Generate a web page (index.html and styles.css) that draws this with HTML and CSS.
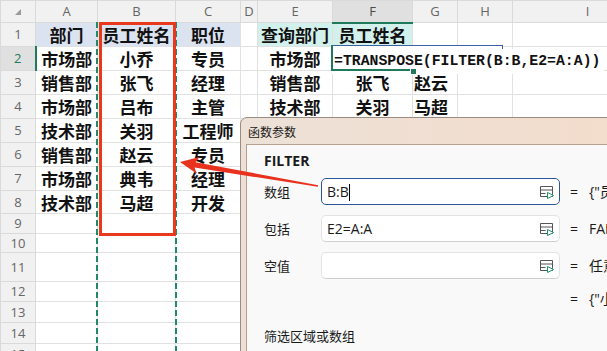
FILE: index.html
```html
<!DOCTYPE html>
<html>
<head>
    <title>FILTER 函数参数</title>
    <link rel="stylesheet" href="styles.css">
</head>
<body>
    <table class="grid">
        <colgroup>
            <col class="w-head"><col class="w-a"><col class="w-b"><col class="w-c"><col class="w-d">
            <col class="w-e"><col class="w-f"><col class="w-g"><col class="w-h"><col class="w-i">
        </colgroup>
        <tr class="h22">
            <th class="corner"><svg width="6" height="6" viewBox="0 0 6 6"><polygon points="6,0 6,6 0,6" fill="#9a9a9a"/></svg></th>
            <th>A</th><th>B</th><th>C</th><th>D</th><th>E</th><th class="sel-col">F</th><th>G</th><th>H</th><th>I</th>
        </tr>
        <tr class="h24"><th>1</th><td class="blue">部门</td><td class="blue">员工姓名</td><td class="blue">职位</td><td></td><td class="mint">查询部门</td><td class="mint">员工姓名</td><td></td><td></td><td></td></tr>
        <tr class="h24"><th class="sel-row">2</th><td>市场部</td><td>小乔</td><td>专员</td><td></td><td>市场部</td><td></td><td></td><td></td><td></td></tr>
        <tr class="h24"><th>3</th><td>销售部</td><td>张飞</td><td>经理</td><td></td><td>销售部</td><td>张飞</td><td class="left">赵云</td><td></td><td></td></tr>
        <tr class="h24"><th>4</th><td>市场部</td><td>吕布</td><td>主管</td><td></td><td>技术部</td><td>关羽</td><td class="left">马超</td><td></td><td></td></tr>
        <tr class="h24"><th>5</th><td>技术部</td><td>关羽</td><td>工程师</td><td></td><td></td><td></td><td></td><td></td><td></td></tr>
        <tr class="h24"><th>6</th><td>销售部</td><td>赵云</td><td>专员</td><td></td><td></td><td></td><td></td><td></td><td></td></tr>
        <tr class="h24"><th>7</th><td>市场部</td><td>典韦</td><td>经理</td><td></td><td></td><td></td><td></td><td></td><td></td></tr>
        <tr class="h23"><th>8</th><td>技术部</td><td>马超</td><td>开发</td><td></td><td></td><td></td><td></td><td></td><td></td></tr>
        <tr class="h20"><th>9</th><td></td><td></td><td></td><td></td><td></td><td></td><td></td><td></td><td></td></tr>
        <tr class="h19"><th>10</th><td></td><td></td><td></td><td></td><td></td><td></td><td></td><td></td><td></td></tr>
        <tr class="h29"><th>11</th><td></td><td></td><td></td><td></td><td></td><td></td><td></td><td></td><td></td></tr>
        <tr class="h20"><th>12</th><td></td><td></td><td></td><td></td><td></td><td></td><td></td><td></td><td></td></tr>
        <tr class="h21"><th>13</th><td></td><td></td><td></td><td></td><td></td><td></td><td></td><td></td><td></td></tr>
        <tr class="h21"><th>14</th><td></td><td></td><td></td><td></td><td></td><td></td><td></td><td></td><td></td></tr>
        <tr class="h21"><th>15</th><td></td><td></td><td></td><td></td><td></td><td></td><td></td><td></td><td></td></tr>
    </table>

    <!-- copy marquee around column B -->
    <div class="ants ants-left"></div>
    <div class="ants ants-right"></div>
    <div class="pick"></div>

    <!-- in-cell editor on F2 -->
    <div class="editor"><span class="formula">=TRANSPOSE(FILTER(B:B,E2=A:A))</span></div>
    <div class="active-cell"></div>
    <div class="fill-handle"></div>

    <div class="dialog">
        <div class="dialog-title">函数参数</div>
        <div class="dialog-body">
            <div class="fn-name">FILTER</div>
            <div class="args">
                <div class="arg-label">数组</div>
                <div class="arg-input focused"><span>B:B<span class="caret"></span></span>
                    <svg class="ref-icon" width="16" height="15" viewBox="0 0 16 15"><path d="M1.5 1.5h12v10h-12z M1.5 5h12 M1.5 8.5h5" fill="none" stroke="#555"/><path d="M8.5 7.5l6 3-6 3z" fill="#fff" stroke="#1d9468"/></svg>
                </div>
                <div class="arg-value"><span class="eq">=</span>{"员工姓名";"小乔";"张飞";"吕布"}</div>

                <div class="arg-label">包括</div>
                <div class="arg-input"><span>E2=A:A</span>
                    <svg class="ref-icon" width="16" height="15" viewBox="0 0 16 15"><path d="M1.5 1.5h12v10h-12z M1.5 5h12 M1.5 8.5h5" fill="none" stroke="#555"/><path d="M8.5 7.5l6 3-6 3z" fill="#fff" stroke="#1d9468"/></svg>
                </div>
                <div class="arg-value"><span class="eq">=</span>FALSE</div>

                <div class="arg-label">空值</div>
                <div class="arg-input"><span></span>
                    <svg class="ref-icon" width="16" height="15" viewBox="0 0 16 15"><path d="M1.5 1.5h12v10h-12z M1.5 5h12 M1.5 8.5h5" fill="none" stroke="#555"/><path d="M8.5 7.5l6 3-6 3z" fill="#fff" stroke="#1d9468"/></svg>
                </div>
                <div class="arg-value"><span class="eq">=</span>任意</div>

                <div></div>
                <div></div>
                <div class="arg-value"><span class="eq">=</span>{"小乔","吕布","典韦"}</div>
            </div>
            <div class="fn-desc">筛选区域或数组</div>
        </div>
    </div>

    <svg class="arrow" width="607" height="351" viewBox="0 0 607 351">
        <polygon points="180,162 199.5,157 195.5,162.3 318.2,185.2 317.8,186.8 194.6,167.6 196.5,173.6" fill="#e8321e"/>
    </svg>
</body>
</html>
```

FILE: styles.css
```css
body {
    margin: 0;
    width: 607px;
    height: 351px;
    overflow: hidden;
    position: relative;
    background: #fff;
    font-family: "Noto Sans CJK SC", sans-serif;
}

/* sheet grid */
.grid {
    border-collapse: collapse;
    table-layout: fixed;
    width: 662px;
}
.w-head { width: 35px; }
.w-a { width: 62px; }
.w-b { width: 78px; }
.w-c { width: 65px; }
.w-d { width: 17px; }
.w-e { width: 75px; }
.w-f { width: 80px; }
.w-g { width: 45px; }
.w-h { width: 55px; }
.w-i { width: 150px; }

.h22 { height: 22px; }
.h19 { height: 19px; }
.h20 { height: 20px; }
.h21 { height: 21px; }
.h23 { height: 23px; }
.h24 { height: 24px; }
.h29 { height: 29px; }

.grid th,
.grid td {
    padding: 0;
    border: 1px solid #e1e1e1;
    white-space: nowrap;
    overflow: hidden;
    line-height: 1;
}
.grid th {
    background: #f1f1f1;
    border-color: #dadada;
    color: #666;
    font-family: "Open Sans", sans-serif;
    font-weight: normal;
    font-size: 13px;
}
.grid td {
    text-align: center;
    font-size: 17px;
    font-weight: 700;
    color: #111;
}
.grid th.corner {
    text-align: right;
    vertical-align: bottom;
    padding: 0 14px 5px 0;
}
.grid th.sel-col {
    background: #e0e0e0;
    color: #4a4a4a;
    border-bottom: 2px solid #1f7a5a;
}
.grid th.sel-row {
    background: #e0e0e0;
    color: #1f7a5a;
    border-right: 2px solid #1f7a5a;
}
.grid td.blue { background: #dbe3f1; }
.grid td.mint { background: #d3f1ec; }
.grid td.left { text-align: left; padding-left: 1px; }

/* marquee + highlight */
.ants {
    position: absolute;
    top: 22px;
    width: 2px;
    height: 330px;
    background: repeating-linear-gradient(to bottom, #1f8a66 0 6px, transparent 6px 9px);
}
.ants-left { left: 96px; }
.ants-right { left: 175px; }
.pick {
    position: absolute;
    left: 99px;
    top: 22px;
    width: 77px;
    height: 214px;
    box-sizing: border-box;
    border: 3px solid #e8391c;
}

/* editor */
.editor {
    position: absolute;
    left: 332px;
    top: 45px;
    width: 170px;
    height: 24px;
    border-top: 1px solid #3a63a5;
    border-right: 1px solid #3a63a5;
    background: #fff;
    white-space: nowrap;
}
.formula {
    display: inline-block;
    background: #fff;
    padding: 0 4px 0 2px;
    font-family: "Liberation Mono", monospace;
    font-weight: 700;
    font-size: 14.8px;
    line-height: 25px;
    color: #111;
}
.active-cell {
    position: absolute;
    left: 331px;
    top: 45px;
    width: 80px;
    height: 24px;
    border-left: 2px solid #1f7a5a;
    border-bottom: 2px solid #1f7a5a;
}
.fill-handle {
    position: absolute;
    left: 410px;
    top: 68px;
    width: 5px;
    height: 5px;
    background: #1f7a5a;
    border: 1px solid #fff;
}

/* function arguments dialog */
.dialog {
    position: absolute;
    left: 240px;
    top: 117px;
    width: 400px;
    height: 260px;
    border: 1px solid #9b8b80;
    border-radius: 7px;
    padding-left: 5px;
    background: linear-gradient(90deg, #ede1d7, #f3dccb);
}
.dialog-title {
    height: 26px;
    line-height: 28px;
    padding-left: 2px;
    font-size: 12px;
    color: #1a1a1a;
}
.dialog-body {
    height: 100%;
    background: #f9f9f9;
    border-top: 1px solid #b99e8b;
    border-left: 1px solid #b99e8b;
    padding: 6px 0 0 17px;
    color: #1a1a1a;
}
.fn-name {
    font-family: "Open Sans", sans-serif;
    font-weight: 700;
    font-size: 14px;
    line-height: 20px;
    margin-bottom: 7px;
}
.args {
    display: grid;
    grid-template-columns: 47px 239px auto;
    column-gap: 10px;
    row-gap: 10px;
    align-items: center;
}
.arg-label {
    font-size: 13px;
}
.arg-input {
    height: 27px;
    box-sizing: border-box;
    border: 1px solid #e3e3e3;
    border-bottom-color: #cfcfcf;
    border-radius: 5px;
    background: #fff;
    display: flex;
    align-items: center;
    justify-content: space-between;
    padding: 0 4px 0 5px;
    font-family: "Open Sans", sans-serif;
    font-size: 14px;
}
.arg-input.focused {
    border: 1px solid #2a5699;
}
.caret {
    display: inline-block;
    width: 1px;
    height: 17px;
    background: #000;
    vertical-align: -4px;
}
.ref-icon {
    flex: none;
    margin-top: 1px;
}
.arg-value {
    font-family: "Open Sans", "Noto Sans CJK SC", sans-serif;
    font-size: 14px;
    line-height: 20px;
    white-space: nowrap;
}
.eq {
    margin-right: 11px;
}
.fn-desc {
    margin-top: 17px;
    font-size: 13px;
    line-height: 20px;
}

.arrow {
    position: absolute;
    left: 0;
    top: 0;
}
```
